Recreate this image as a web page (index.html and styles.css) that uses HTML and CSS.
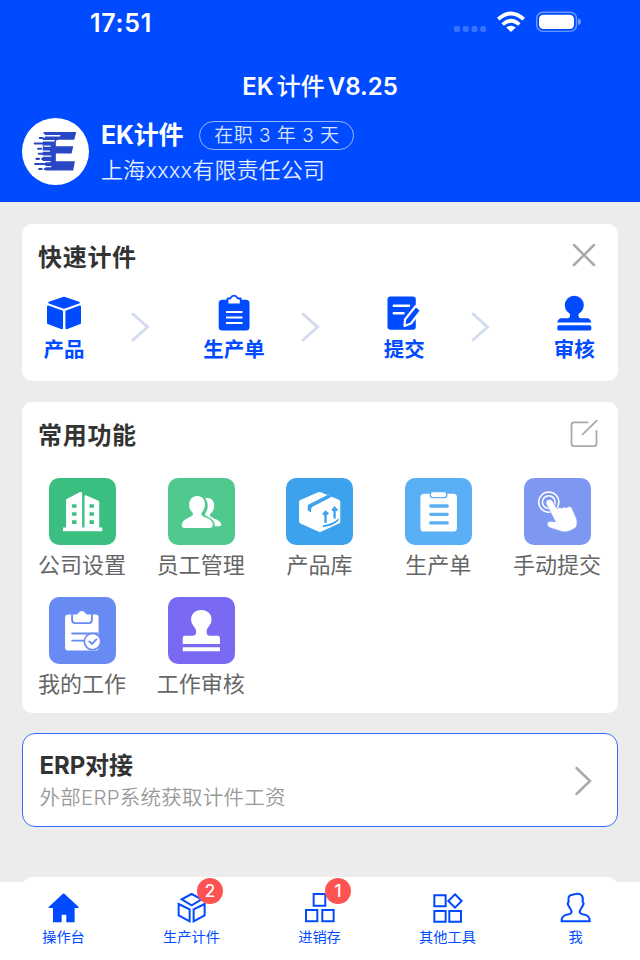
FILE: index.html
```html
<!DOCTYPE html>
<html lang="zh-CN">
<head>
<meta charset="utf-8">
<title>EK 计件</title>
<link rel="stylesheet" href="styles.css">
</head>
<body>
<div class="screen">
  <header class="header">
    <div class="status">
      <span class="time">17:51</span>
      <svg class="status-icons" viewBox="452 8 130 28" fill="#fff">
        <g opacity=".22"><rect x="454" y="26" width="6" height="6" rx="2"/><rect x="462.8" y="26" width="6" height="6" rx="2"/><rect x="471.5" y="26" width="6" height="6" rx="2"/><rect x="480.2" y="26" width="6" height="6" rx="2"/></g>
        <path d="M511 32L506.2 27.6Q511 23.8 515.8 27.6Z"/>
        <g fill="none" stroke="#fff" stroke-width="3.7"><path d="M502.7 24.5Q511 17 519.3 24.5"/><path d="M498.3 19.2Q511 7.8 523.7 19.2"/></g>
        <rect x="536.7" y="12.2" width="39.8" height="19.2" rx="6.2" fill="none" stroke="#fff" stroke-width="1.4" opacity=".42"/>
        <rect x="539" y="14.8" width="35" height="14.2" rx="4.2"/>
        <path d="M578 18.5Q581 19.4 581 21.8T578 25Z" opacity=".45"/>
      </svg>
    </div>
    <h1 class="title">EK <span>计件</span> V8.25</h1>
    <div class="profile">
      <svg class="avatar" viewBox="0 0 200 200">
        <circle cx="100" cy="100" r="100" fill="#fff"/>
        <path d="M68 42H162L156 65H108Q101 65 101 72V84H153L148 106H101V129H158L153 157H70V130H62V60H68Z" fill="#2946c5"/>
        <g stroke="#2946c5" stroke-width="6" stroke-linecap="round"><path d="M67 45H90M53 60H62M38 76H70M48 92H57M66 92H74M50 107H72M60 122H70M43 122H51M39 137H70M51 152H59M68 152H78"/></g>
        <g stroke="#fff" stroke-width="4" stroke-linecap="round"><path d="M64 53H113M60 68H96M66 84H84M60 99H82M58 114H86M60 130H84M62 145H86"/></g>
      </svg>
      <div class="who">
        <div class="who-row"><span class="name">EK计件</span><span class="tenure">在职 3 年 3 天</span></div>
        <div class="company">上海xxxx有限责任公司</div>
      </div>
    </div>
  </header>

  <main class="main">
    <section class="card quick">
      <div class="card-head">
        <h2>快速计件</h2>
        <svg class="head-icon" viewBox="0 0 28 28"><path d="M4 4L24 24M24 4L4 24"/></svg>
      </div>
      <div class="steps">
        <div class="step">
          <svg viewBox="0 0 40 38" fill="#004bff" stroke="#004bff" stroke-linejoin="round" stroke-width="2"><path d="M20 3.8L34.8 8.6L20 13.7L5.2 8.6Z"/><path d="M4 12.5L18 17.5V34.3L4 29Z"/><path d="M36 12.5L22.4 17.5V34.3L36 29Z"/></svg>
          <span>产品</span>
        </div>
        <svg class="next" viewBox="0 0 20 32"><path d="M3 3L17.5 16L3 29"/></svg>
        <div class="step">
          <svg viewBox="0 0 40 38"><rect x="4.7" y="5.7" width="30.8" height="30.7" rx="3.5" fill="#004bff"/><path d="M13.5 10.5V4.5H16Q20 -1.2 24 4.5H26.7V10.5Z" fill="#fff" stroke="#004bff" stroke-width="1.8" stroke-linejoin="round"/><path d="M12 18H28.5M12 23.5H28.5M12 29H28.5" stroke="#fff" stroke-width="2"/></svg>
          <span>生产单</span>
        </div>
        <svg class="next" viewBox="0 0 20 32"><path d="M3 3L17.5 16L3 29"/></svg>
        <div class="step">
          <svg viewBox="0 0 40 38"><rect x="3.5" y="2.6" width="28.3" height="33.2" rx="3" fill="#004bff"/><path d="M9.8 11.8H25M9.8 19.3H19.5" stroke="#fff" stroke-width="2.5" stroke-linecap="round"/><path d="M31.8 12L21 25.5L20.5 32L27 29.5L37 16.5Z" fill="#004bff" stroke="#fff" stroke-width="2.2" stroke-linejoin="round"/></svg>
          <span>提交</span>
        </div>
        <svg class="next" viewBox="0 0 20 32"><path d="M3 3L17.5 16L3 29"/></svg>
        <div class="step">
          <svg viewBox="0 0 40 38" fill="#004bff"><circle cx="20.3" cy="11.3" r="9.5"/><path d="M14.3 17H26.3C24 20 23.5 24 27 24.2H33Q36.6 24.4 37.3 28.6H3.3Q4 24.4 7.6 24.2H13.6C17 24 16.6 20 14.3 17Z"/><rect x="3.3" y="31.2" width="34" height="5.4" rx="1.6"/></svg>
          <span>审核</span>
        </div>
      </div>
    </section>

    <section class="card common">
      <div class="card-head">
        <h2>常用功能</h2>
        <svg class="head-icon edit" viewBox="0 0 28 28"><path d="M17.7 3.3H4.3Q1.5 3.3 1.5 6V24.6Q1.5 27.2 4.3 27.2H23.7Q26.5 27.2 26.5 24.6V11.8M12.7 15.3L26.7 1.7"/></svg>
      </div>
      <div class="apps">
        <div class="app">
          <svg class="tile green" viewBox="0 0 200 200"><path d="M42 148H51V66Q51 63 54 62L93 42Q99 40 99 46V148H106V54Q107 50 112 52L146 67Q150 69 150 73V148H159V159H42Z" fill="#fff"/><path d="M69 78h13v11h-13zM69 102h13v11h-13zM69 126h13v11h-13zM121 78h13v11h-13zM121 102h13v11h-13zM121 126h13v11h-13z" fill="#3abf80"/></svg>
          <span>公司设置</span>
        </div>
        <div class="app">
          <svg class="tile mint" viewBox="0 0 200 200" fill="#fff"><path d="M111 61C127 55 139 68 138 83C138 95 132 102 126 107C121 114 132 118 145 124Q159 131 159 140Q158 144 151 144H140C139 127 130 121 113 113Q108 110 112 105C121 92 121 72 111 61Z"/><path d="M87 54C103 54 111 66 110 80C110 91 105 98 101 103C96 113 107 115 120 121Q135 128 134 142Q133 149 125 149H50Q41 149 41 141Q41 128 58 120C71 114 78 113 73 103C67 97 63 90 63 80C63 65 72 54 87 54Z"/></svg>
          <span>员工管理</span>
        </div>
        <div class="app">
          <svg class="tile blue" viewBox="0 0 200 200"><path d="M39 72Q39 68 43 66L94 43Q100 40 106 43L158 65Q162 67 162 71V131Q162 134 158 136L106 160Q101 162 96 160L43 136Q39 134 39 130Z" fill="#fff"/><path d="M124 51L137 56L80 85Q75 88 75 94V103L65 97V84Q65 80 69 78ZM110 141Q142 136 157 120V126Q143 143 110 147Z" fill="#3ca2ee"/><path d="M118 134V103M111 110L118 101L126 108M145 121V92M138 98L145 89L153 97" fill="none" stroke="#3ca2ee" stroke-width="7"/></svg>
          <span>产品库</span>
        </div>
        <div class="app">
          <svg class="tile sky" viewBox="0 0 200 200"><rect x="46" y="47" width="109" height="113" rx="11" fill="#fff"/><rect x="75.500" y="40.500" width="49" height="18" rx="7" fill="#fff" stroke="#5aaef3" stroke-width="4"/><path d="M77 83.500H126M77 108.500H126M77 134H126" stroke="#5aaef3" stroke-width="10" stroke-linecap="round"/></svg>
          <span>生产单</span>
        </div>
        <div class="app">
          <svg class="tile peri" viewBox="0 0 200 200"><g fill="none" stroke="#fff" stroke-width="4.500"><circle cx="74" cy="72" r="30"/><circle cx="74" cy="72" r="19"/></g><path d="M67 79C60 66 79 59 86 70L98 91Q106 85 112 90Q119 83 126 89Q140 80 144 92L157 122Q161 132 156 147Q138 162 118 161Q93 154 79 149Q69 146 69 136Q72 125 94 131Q83 110 67 79Z" fill="#fff" stroke="#7e98f2" stroke-width="2"/></svg>
          <span>手动提交</span>
        </div>
        <div class="app">
          <svg class="tile indigo" viewBox="0 0 200 200"><path d="M58 52H82Q87 52 88 48Q91 42 98 42T108 48Q109 52 114 52H139Q148 52 148 61V150Q148 160 139 160H58Q48 160 48 150V62Q48 52 58 52Z" fill="#fff"/><path d="M69 50V69Q69 78 78 78H119Q128 78 128 69V50M69 109H145M69 130H107" fill="none" stroke="#688bf3" stroke-width="5.500" stroke-linecap="round"/><circle cx="130" cy="133" r="24.500" fill="#fff" stroke="#688bf3" stroke-width="5"/><path d="M119 131L128 140L143 125" fill="none" stroke="#688bf3" stroke-width="5.500"/></svg>
          <span>我的工作</span>
        </div>
        <div class="app">
          <svg class="tile violet" viewBox="0 0 200 200" fill="#fff"><path d="M99 39C119 39 130 52 130 67C130 84 115 91 115 103C115 112 118 116 126 116H149Q155 116 155 123V140H44V123Q44 116 50 116H73C81 116 84 112 84 103C84 91 69 84 69 67C69 52 80 39 99 39ZM44 150H155V162H44Z"/></svg>
          <span>工作审核</span>
        </div>
      </div>
    </section>

    <section class="card erp">
      <div class="erp-text">
        <h2>ERP对接</h2>
        <p>外部ERP系统获取计件工资</p>
      </div>
      <svg class="erp-arrow" viewBox="0 0 20 32"><path d="M3.500 3L17 16L3.500 29"/></svg>
    </section>

    <section class="card upcoming"></section>
  </main>

  <nav class="tabs">
    <div class="tab">
      <svg viewBox="0 0 100 100" fill="#004bff"><path d="M47 6Q50 3 53 6L95 45Q97 48 93 48H83V91H58V68H44V91H18V48H7Q3 48 5 45Z"/></svg>
      <span>操作台</span>
    </div>
    <div class="tab">
      <svg viewBox="0 0 100 100"><path d="M50 6L80 22L50 40L20 22ZM11 36L44 52V88L11 70ZM89 36L56 52V88L89 70Z"/></svg>
      <span>生产计件</span><b class="badge">2</b>
    </div>
    <div class="tab">
      <svg viewBox="0 0 100 100"><path d="M32 6H67V41H32ZM9 54H43V88H9ZM58 54H92V88H58Z"/></svg>
      <span>进销存</span><b class="badge">1</b>
    </div>
    <div class="tab">
      <svg viewBox="0 0 100 100"><path d="M10 10H44V43H10ZM10 57H44V89H10ZM55 57H90V89H55ZM72 7L92 27L72 47L52 27Z"/></svg>
      <span>其他工具</span>
    </div>
    <div class="tab">
      <svg viewBox="0 0 100 100"><path d="M50 6C68 3 74 14 71 29Q77 34 70 43C68 49 65 50 64 54C59 63 65 66 77 68Q93 72 92 88H8Q7 72 23 68C35 66 41 63 36 54C35 50 32 49 30 43Q23 34 29 29C26 15 31 8 42 8Q44 6 50 6Z"/></svg>
      <span>我</span>
    </div>
  </nav>
</div>
</body>
</html>
```

FILE: styles.css
```css
* { box-sizing: border-box; }
body, h1, h2, p { margin: 0; }
body {
  font-family: Inter, "Noto Sans CJK SC", sans-serif;
  background: #ececec;
}
.screen {
  position: relative;
  width: 640px;
  height: 960px;
  overflow: hidden;
  display: flex;
  flex-direction: column;
}
.header {
  flex: none;
  height: 202px;
  background: #004bff;
  color: #fff;
}
.status {
  height: 61px;
  padding: 8px 58px 0 90px;
  display: flex;
  justify-content: space-between;
  align-items: flex-start;
}
.time { font-size: 25px; font-weight: 600; line-height: 30px; letter-spacing: .7px; }
.status-icons { width: 130px; height: 28px; }
.title {
  height: 51px;
  line-height: 51px;
  font-size: 24px;
  font-weight: 600;
  text-align: center;
  word-spacing: -3px;
}
.title span { font-weight: 500; }
.profile { display: flex; padding: 5.500px 22px 0; gap: 12px; }
.avatar { width: 67px; height: 67px; flex: none; }
.who-row { display: flex; align-items: center; height: 35px; gap: 16px; }
.name { font-size: 25px; font-weight: 700; line-height: 34px; letter-spacing: -.2px; }
.tenure {
  width: 155px;
  height: 29px;
  line-height: 27px;
  border: 1.500px solid rgba(255,255,255,.7);
  border-radius: 15px;
  text-align: center;
  font-size: 19px;
  font-weight: 350;
  letter-spacing: .5px;
  opacity: .85;
  white-space: nowrap;
}
.company { font-size: 22px; line-height: 34px; font-weight: 350; opacity: .9; letter-spacing: .1px; }
.main {
  flex: none;
  padding: 22px 22px 0;
  display: flex;
  flex-direction: column;
}
.card { background: #fff; border-radius: 10px; flex: none; }
.card-head {
  display: flex;
  justify-content: space-between;
  align-items: center;
  height: 64px;
  padding: 4px 20px 0 16px;
}
h2 { color: #333; font-size: 24px; font-weight: 700; line-height: 32px; letter-spacing: .7px; }
.head-icon { width: 28px; height: 28px; margin-bottom: 6px; fill: none; stroke: #aaa; stroke-width: 2.500; stroke-linecap: round; }
.head-icon.edit { stroke-width: 1.800; }
.quick { height: 157px; margin-bottom: 20.500px; }
.steps { display: flex; padding: 6px 0 0 11px; }
.step { width: 62px; flex: none; display: flex; flex-direction: column; align-items: center; }
.step svg { width: 40px; height: 38px; }
.step span { color: #004bff; font-size: 20.500px; font-weight: 700; line-height: 36px; white-space: nowrap; }
.next {
  width: 20px;
  height: 32px;
  flex: none;
  margin: 16.500px 53.200px 0 34.900px;
  fill: none;
  stroke: #d3dbee;
  stroke-width: 3;
  stroke-linecap: round;
}
.common { height: 311px; margin-bottom: 20.500px; }
.apps { display: grid; grid-template-columns: repeat(5, 118.800px); grid-auto-rows: 119.400px; padding: 12.500px 1px 0; }
.app { display: flex; flex-direction: column; align-items: center; }
.tile { width: 67px; height: 67px; border-radius: 10px; }
.app span { color: #666; font-size: 22px; line-height: 40px; margin-left: -1px; }
.green { background: #3abf80; }
.mint { background: #4fc98d; }
.blue { background: #3ca2ee; }
.sky { background: #5aaef3; }
.peri { background: #7e98f2; }
.indigo { background: #688bf3; }
.violet { background: #7969f3; }
.erp {
  height: 94px;
  margin-bottom: 50px;
  border: 1.500px solid #3470ff;
  border-radius: 13px;
  display: flex;
  justify-content: space-between;
  padding: 16px 24px 0 16.500px;
}
.erp h2 { letter-spacing: -.1px; }
.erp p { color: #999; font-size: 20.500px; font-weight: 350; line-height: 31px; letter-spacing: .25px; }
.erp-arrow { width: 20px; height: 32px; margin-top: 15px; fill: none; stroke: #aaa; stroke-width: 2.500; stroke-linecap: round; }
.upcoming { height: 83px; }
.tabs {
  position: absolute;
  left: 0;
  right: 0;
  bottom: 0;
  height: 78px;
  background: #fff;
  display: grid;
  grid-template-columns: repeat(5, 1fr);
}
.tab { position: relative; display: flex; flex-direction: column; align-items: center; padding-top: 9.700px; }
.tab svg { width: 33.300px; height: 33.300px; fill: none; stroke: #004bff; stroke-width: 6; }
.tab:first-child svg { fill: #004bff; stroke: none; }
.tab span { color: #004bff; font-size: 14.200px; line-height: 24px; margin-left: -1px; }
.badge {
  position: absolute;
  left: 69px;
  top: -4px;
  width: 26px;
  height: 26px;
  border-radius: 50%;
  background: #ff5252;
  color: #fff;
  text-align: center;
  font-size: 17px;
  font-weight: 500;
  line-height: 26px;
}
```
